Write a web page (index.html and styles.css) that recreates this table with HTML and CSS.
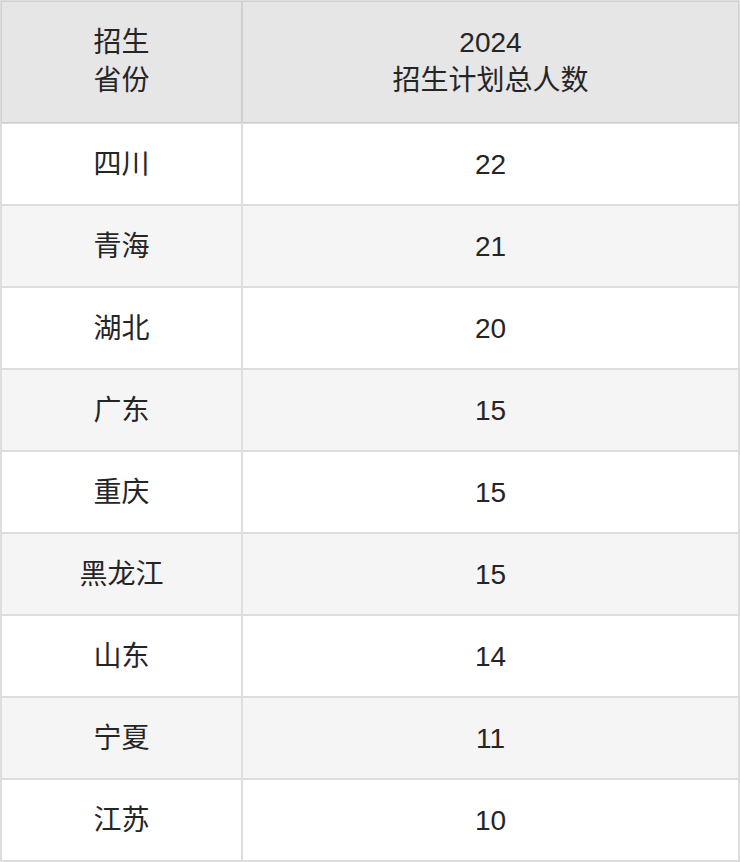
FILE: index.html
```html
<!DOCTYPE html>
<html lang="zh">
<head>
<meta charset="utf-8">
<title>招生计划</title>
<link rel="stylesheet" href="styles.css">
</head>
<body>
<table class="plan">
  <thead>
    <tr>
      <th class="col-prov">招生<br>省份</th>
      <th class="col-num">2024<br>招生计划总人数</th>
    </tr>
  </thead>
  <tbody>
    <tr><td>四川</td><td>22</td></tr>
    <tr><td>青海</td><td>21</td></tr>
    <tr><td>湖北</td><td>20</td></tr>
    <tr><td>广东</td><td>15</td></tr>
    <tr><td>重庆</td><td>15</td></tr>
    <tr><td>黑龙江</td><td>15</td></tr>
    <tr><td>山东</td><td>14</td></tr>
    <tr><td>宁夏</td><td>11</td></tr>
    <tr><td>江苏</td><td>10</td></tr>
  </tbody>
</table>
</body>
</html>
```
FILE: styles.css
```css
html, body {
  margin: 0;
  padding: 0;
  background: #ffffff;
}

.plan {
  width: 740px;
  table-layout: fixed;
  border-collapse: separate;
  border-spacing: 0;
  border: 1px solid #dddddd;
  font-family: "Liberation Sans", "Noto Sans CJK SC", sans-serif;
  font-size: 28px;
  color: #252525;
}

.plan th,
.plan td {
  border: 1px solid #dddddd;
  text-align: center;
  vertical-align: middle;
  padding: 0;
}

.plan th {
  height: 120px;
  background: #e6e6e6;
  font-weight: normal;
  line-height: 38px;
  border-color: #d0d0d0;
}

.col-prov {
  width: 239px;
}

.plan td {
  height: 78px;
  line-height: 32px;
  padding-top: 2px;
}

.plan tbody tr:nth-child(even) td {
  background: #f5f5f5;
}
```
